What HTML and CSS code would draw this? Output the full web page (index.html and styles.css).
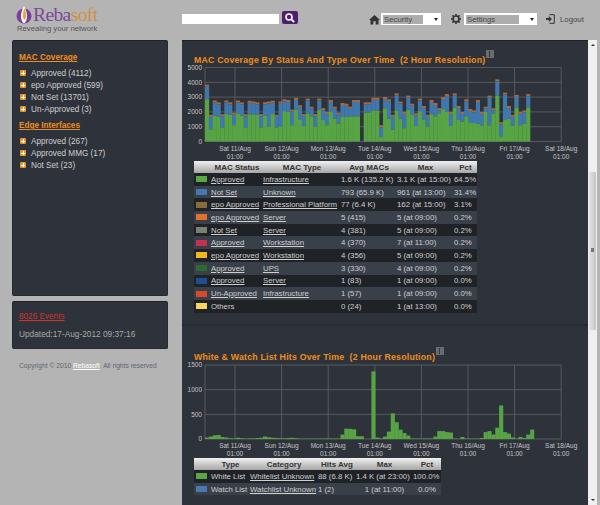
FILE: index.html
```html
<!DOCTYPE html>
<html lang="en">
<head>
    <meta charset="UTF-8">
    <title>Rebasoft</title>
    <link rel="stylesheet" href="styles.css">
</head>
<body>
    <header class="top">
        <div class="logo">
            <svg class="logo-mark" width="16" height="18" viewBox="0 0 16 18">
                <circle cx="8" cy="10" r="7.5" fill="#7b3f98"/>
                <path d="M8 0 C6.5 3 5 6 5 10 C5 14 6.5 17 8 17 C9.5 17 11 14 11 10 C11 6 9.5 3 8 0 Z" fill="#fff"/>
                <path d="M8.5 2 C7 6 6.5 9 7.5 13 C8.5 15 10 13 10 10 C10 7 9.5 4 8.5 2 Z" fill="#eda62c"/>
            </svg>
            <div class="logo-name"><span class="reba">Reba</span><span class="soft">soft</span></div>
            <div class="logo-tag">Revealing your network</div>
        </div>
        <div class="search">
            <div class="search-box"></div>
            <div class="search-btn">
                <svg width="10" height="10" viewBox="0 0 10 10">
                    <circle cx="4" cy="4" r="3" fill="none" stroke="#fff" stroke-width="1.6"/>
                    <path d="M6.2 6.2 L9.2 9.2" stroke="#fff" stroke-width="1.8"/>
                </svg>
            </div>
        </div>
        <nav class="nav">
            <svg class="nav-icon" width="11" height="11" viewBox="0 0 11 11">
                <path d="M5.5 1 L11 6 L9.5 6 L9.5 10.5 L6.7 10.5 L6.7 7.2 L4.3 7.2 L4.3 10.5 L1.5 10.5 L1.5 6 L0 6 Z" fill="#333"/>
            </svg>
            <div class="pick pick-security"><span class="pick-label">Security</span><i class="pick-arrow"></i></div>
            <svg class="nav-icon gear" width="10" height="10" viewBox="0 0 10 10">
                <circle cx="5" cy="5" r="3" fill="none" stroke="#333" stroke-width="1.7"/>
                <path d="M5 0 V2 M5 8 V10 M0 5 H2 M8 5 H10 M1.4 1.4 L2.8 2.8 M7.2 7.2 L8.6 8.6 M1.4 8.6 L2.8 7.2 M7.2 2.8 L8.6 1.4" stroke="#333" stroke-width="1.5"/>
            </svg>
            <div class="pick pick-settings"><span class="pick-label">Settings</span><i class="pick-arrow"></i></div>
            <svg class="nav-icon logout-icon" width="9" height="10" viewBox="0 0 9 10">
                <path d="M3.5 0.7 H8.3 V9.3 H3.5" fill="none" stroke="#333" stroke-width="1"/>
                <path d="M0 4 H2.8 V2 L6 5 L2.8 8 V6 H0 Z" fill="#333"/>
            </svg>
            <a class="logout">Logout</a>
        </nav>
    </header>

    <div class="page">
        <aside class="side">
            <section class="box box-tree">
                <h3 class="tree-title">MAC Coverage</h3>
                <ul class="tree">
                    <li><i class="plus"></i>Approved (4112)</li>
                    <li><i class="plus"></i>epo Approved (599)</li>
                    <li><i class="plus"></i>Not Set (13701)</li>
                    <li><i class="plus"></i>Un-Approved (3)</li>
                </ul>
                <h3 class="tree-title">Edge Interfaces</h3>
                <ul class="tree">
                    <li><i class="plus"></i>Approved (267)</li>
                    <li><i class="plus"></i>Approved MMG (17)</li>
                    <li><i class="plus"></i>Not Set (23)</li>
                </ul>
            </section>
            <section class="box box-events">
                <a class="events">8026 Events</a>
                <p class="updated">Updated:17-Aug-2012 09:37:16</p>
            </section>
            <p class="copy">Copyright © 2010 <span class="copy-link">Rebasoft</span>. All rights reserved</p>
        </aside>

        <main class="main">
            <section class="report report-mac">
                <h2 class="report-title">MAC Coverage By Status And Type Over Time &nbsp;(2 Hour Resolution)<i class="mini"></i></h2>
                <svg class="chart" id="chartMac" width="400" height="99"></svg>
                <table class="grid grid-mac">
                    <thead>
                        <tr><th class="c-sw"></th><th class="c-a">MAC Status</th><th class="c-b">MAC Type</th><th class="c-c">Avg MACs</th><th class="c-d">Max</th><th class="c-e">Pct</th></tr>
                    </thead>
                    <tbody>
                        <tr><td><i class="sw s1"></i></td><td><a>Approved</a></td><td><a>Infrastructure</a></td><td>1.6 K (135.2 K)</td><td>3.1 K (at 15:00)</td><td>64.5%</td></tr>
                        <tr><td><i class="sw s2"></i></td><td><a>Not Set</a></td><td><a>Unknown</a></td><td>793 (65.9 K)</td><td>961 (at 13:00)</td><td>31.4%</td></tr>
                        <tr><td><i class="sw s3"></i></td><td><a>epo Approved</a></td><td><a>Professional Platform</a></td><td>77 (6.4 K)</td><td>162 (at 15:00)</td><td>3.1%</td></tr>
                        <tr><td><i class="sw s4"></i></td><td><a>epo Approved</a></td><td><a>Server</a></td><td>5 (415)</td><td>5 (at 09:00)</td><td>0.2%</td></tr>
                        <tr><td><i class="sw s5"></i></td><td><a>Not Set</a></td><td><a>Server</a></td><td>4 (381)</td><td>5 (at 09:00)</td><td>0.2%</td></tr>
                        <tr><td><i class="sw s6"></i></td><td><a>Approved</a></td><td><a>Workstation</a></td><td>4 (370)</td><td>7 (at 11:00)</td><td>0.2%</td></tr>
                        <tr><td><i class="sw s7"></i></td><td><a>epo Approved</a></td><td><a>Workstation</a></td><td>4 (356)</td><td>5 (at 09:00)</td><td>0.2%</td></tr>
                        <tr><td><i class="sw s8"></i></td><td><a>Approved</a></td><td><a>UPS</a></td><td>3 (330)</td><td>4 (at 09:00)</td><td>0.2%</td></tr>
                        <tr><td><i class="sw s9"></i></td><td><a>Approved</a></td><td><a>Server</a></td><td>1 (83)</td><td>1 (at 09:00)</td><td>0.0%</td></tr>
                        <tr><td><i class="sw s10"></i></td><td><a>Un-Approved</a></td><td><a>Infrastructure</a></td><td>1 (57)</td><td>1 (at 09:00)</td><td>0.0%</td></tr>
                        <tr><td><i class="sw s11"></i></td><td>Others</td><td></td><td>0 (24)</td><td>1 (at 13:00)</td><td>0.0%</td></tr>
                    </tbody>
                </table>
            </section>
            <section class="report report-lists">
                <h2 class="report-title">White &amp; Watch List Hits Over Time &nbsp;(2 Hour Resolution)<i class="mini"></i></h2>
                <svg class="chart" id="chartLists" width="400" height="99"></svg>
                <table class="grid grid-lists">
                    <thead>
                        <tr><th class="c-sw"></th><th class="l-a">Type</th><th class="l-b">Category</th><th class="l-c">Hits Avg</th><th class="l-d">Max</th><th class="l-e">Pct</th></tr>
                    </thead>
                    <tbody>
                        <tr><td><i class="sw s1"></i></td><td>White List</td><td><a>Whitelist Unknown</a></td><td>88 (6.8 K)</td><td>1.4 K (at 23:00)</td><td>100.0%</td></tr>
                        <tr><td><i class="sw s2"></i></td><td>Watch List</td><td><a>Watchlist Unknown</a></td><td>1 (2)</td><td class="mid">1 (at 11:00)</td><td class="mid">0.0%</td></tr>
                    </tbody>
                </table>
            </section>
        </main>
        <div class="scroll">
            <i class="scroll-up"></i>
            <div class="thumb"><i class="grip"></i></div>
            <i class="scroll-down"></i>
        </div>
    </div>

    <script src="chart.js"></script>
</body>
</html>
```

FILE: styles.css
```css
html, body {
    margin: 0;
    height: 505px;
    overflow: hidden;
}

body {
    background: #b4b4b4;
    font-family: "Liberation Sans", Arial, sans-serif;
    color: #d0d0d0;
}

/* header */
.top {
    display: flex;
    height: 40px;
    box-sizing: border-box;
}

.logo {
    position: relative;
    width: 182px;
    flex: none;
}

.logo-mark {
    position: absolute;
    left: 16px;
    top: 6px;
}

.logo-name {
    position: absolute;
    left: 33px;
    top: 5px;
    font-family: "Liberation Serif", serif;
    font-size: 19.5px;
    letter-spacing: -0.6px;
    line-height: 19px;
}

.reba {
    color: #7b4a9c;
}

.soft {
    color: #cf9240;
}

.logo-tag {
    position: absolute;
    left: 17px;
    top: 24px;
    font-size: 7.7px;
    line-height: 9px;
    color: #555;
}

.search {
    display: flex;
    gap: 3px;
    width: 187px;
    padding-top: 11px;
    box-sizing: border-box;
    flex: none;
}

.search-box {
    width: 97px;
    height: 10px;
    margin-top: 3px;
    background: #fff;
}

.search-btn {
    width: 16px;
    height: 13px;
    background: #4d1f6d;
    border-radius: 2px;
    display: flex;
    align-items: center;
    justify-content: center;
}

.nav {
    display: flex;
    align-items: center;
    height: 38px;
    color: #444;
}

.nav-icon {
    flex: none;
}

.pick {
    display: flex;
    align-items: center;
    height: 12px;
    background: #fff;
    padding: 0 2px;
    box-sizing: border-box;
    margin-left: 1px;
}

.pick-security {
    width: 60px;
}

.pick-settings {
    width: 73px;
    margin-left: 3px;
}

.gear {
    margin-left: 10px;
}

.pick-label {
    display: block;
    background: #adadad;
    height: 9px;
    line-height: 9px;
    font-size: 7.8px;
    padding-left: 1px;
    color: #444;
    flex: 1;
    margin-right: 11px;
}

.pick-arrow {
    width: 0;
    height: 0;
    border-left: 2.5px solid transparent;
    border-right: 2.5px solid transparent;
    border-top: 3px solid #222;
    margin-right: 1px;
}

.logout-icon {
    margin-left: 9px;
}

.logout {
    margin-left: 5px;
    font-size: 7.8px;
    color: #444;
}

/* page body */
.page {
    display: flex;
    height: 465px;
    padding-left: 12px;
}

.side {
    width: 156px;
    margin-right: 14px;
    flex: none;
}

.box {
    background: #2e323a;
    border: 1px solid #26292f;
    border-top-color: #1f2226;
    border-radius: 2px;
    box-sizing: border-box;
}

.box-tree {
    height: 256px;
    padding: 11px 6px 0;
}

.tree-title {
    margin: 0;
    font-size: 8.2px;
    line-height: 11px;
    font-weight: bold;
    color: #ee8e1f;
    text-decoration: underline;
}

.tree {
    list-style: none;
    margin: 4px 0 5px;
    padding: 0;
}

.tree li {
    display: flex;
    align-items: center;
    height: 12px;
    font-size: 8.2px;
    color: #cfcfcf;
}

.plus {
    position: relative;
    width: 6px;
    height: 6px;
    margin: 0 5px 0 1px;
    background: #e8962a;
    border-radius: 1px;
    flex: none;
}

.plus::before {
    content: "";
    position: absolute;
    left: 1px;
    top: 2.5px;
    width: 4px;
    height: 1px;
    background: #fff;
}

.plus::after {
    content: "";
    position: absolute;
    left: 2.5px;
    top: 1px;
    width: 1px;
    height: 4px;
    background: #fff;
}

.box-events {
    height: 48px;
    margin-top: 5px;
    padding: 9px 6px 0;
}

.events {
    display: block;
    font-size: 8.2px;
    line-height: 11px;
    color: #c8362c;
    text-decoration: underline;
}

.updated {
    margin: 7px 0 0;
    font-size: 8.3px;
    line-height: 11px;
    color: #a8a8a8;
}

.copy {
    margin: 12px 0 0 7px;
    font-size: 6.7px;
    line-height: 10px;
    color: #5f6670;
    white-space: nowrap;
}

.copy-link {
    color: #fff;
    text-decoration: underline;
}

.main {
    width: 406px;
    flex: none;
    background: #2e323a;
    border-top: 1px solid #1f2226;
    box-sizing: border-box;
    overflow: hidden;
}

.report-mac {
    height: 283px;
    padding-top: 9px;
    box-sizing: border-box;
}

.report-lists {
    padding-top: 21px;
    border-top: 2px solid #272a30;
}

.report-title {
    margin: 0 0 0 12px;
    height: 12px;
    font-size: 8.8px;
    line-height: 12px;
    font-weight: bold;
    color: #ee8e1f;
    letter-spacing: 0.2px;
    white-space: nowrap;
}

.mini {
    position: relative;
    display: inline-block;
    width: 8px;
    height: 8px;
    margin-left: 1px;
    background: #6a6d70;
    vertical-align: 5px;
}

.mini::after {
    content: "";
    position: absolute;
    left: 3px;
    top: 1px;
    width: 1px;
    height: 6px;
    background: #33363b;
}

.chart {
    display: block;
}

.chart .line {
    stroke: #565a60;
    stroke-width: 1;
    fill: none;
}

.chart text {
    font-size: 6.5px;
    fill: #c6c6c6;
}

.chart .tick-y {
    text-anchor: end;
}

.chart .tick-x {
    text-anchor: middle;
}

.bar-green {
    fill: #57a445;
}

.bar-blue {
    fill: #3f78ae;
}

.bar-cap {
    fill: #b0683a;
}

.grid {
    margin-left: 12px;
    border-collapse: collapse;
    table-layout: fixed;
    font-size: 7.8px;
    color: #cfcfcf;
}

.grid th {
    height: 12px;
    padding: 0;
    font-size: 8px;
    font-weight: bold;
    color: #333;
    background: linear-gradient(#f0f0f0, #a6a6a6);
    text-align: center;
}

.grid td {
    height: 12.7px;
    padding: 0;
    white-space: nowrap;
    overflow: hidden;
}

.grid tbody tr:nth-child(odd) {
    background: #1f2227;
}

.grid tbody tr:nth-child(even) {
    background: #3a404a;
}

.grid a {
    color: #cfcfcf;
    text-decoration: underline;
}

.grid .mid {
    text-align: center;
}

.grid-mac {
    width: 283px;
}

.grid-lists {
    width: 247px;
}

.c-sw {
    width: 17px;
}

.c-a {
    width: 52px;
}

.c-b {
    width: 78px;
}

.c-c {
    width: 56px;
}

.c-d {
    width: 57px;
}

.c-e {
    width: 23px;
}

.l-a {
    width: 39px;
}

.l-b {
    width: 68px;
}

.l-c {
    width: 38px;
}

.l-d {
    width: 57px;
}

.l-e {
    width: 28px;
}

.sw {
    display: block;
    width: 11px;
    height: 6px;
    margin-left: 2px;
}

.s1 { background: #58a845; }
.s2 { background: #4579b2; }
.s3 { background: #8a6c3c; }
.s4 { background: #e2702a; }
.s5 { background: #7c8070; }
.s6 { background: #c8304f; }
.s7 { background: #f0b81c; }
.s8 { background: #2f6b30; }
.s9 { background: #1b4f94; }
.s10 { background: #da4a2a; }
.s11 { background: #f8d65c; }

/* scrollbar */
.scroll {
    position: relative;
    width: 9px;
    flex: none;
    background: #efefef;
}

.scroll-up {
    position: absolute;
    left: 2.5px;
    top: 4px;
    border-left: 2px solid transparent;
    border-right: 2px solid transparent;
    border-bottom: 2px solid #333;
}

.scroll-down {
    position: absolute;
    left: 2.5px;
    bottom: 4px;
    border-left: 2px solid transparent;
    border-right: 2px solid transparent;
    border-top: 2px solid #333;
}

.thumb {
    position: absolute;
    left: 1px;
    top: 132px;
    width: 7px;
    height: 158px;
    background: linear-gradient(90deg, #e4e4e4, #c4c4c4);
    border-radius: 1px;
}

.grip {
    position: absolute;
    left: 2px;
    top: 76px;
    width: 3px;
    height: 4px;
    background: #777;
}
```

FILE: chart.js
```js
// total and green height of each stacked bar, in thousands
var macBars = [
    [3.84, 2.86], [1.8, .82], [2.77, 1.75], [2.65, 1.68], [1.84, .91], [2.77, 1.86], [2.64, 1.8], [1.95, 1.1],
    [2.77, 1.9], [2.64, 1.75], [1.84, .91], [2.75, 1.84], [2.7, 1.84], [2.65, 1.8], [1.85, .95], [2.65, 1.75],
    [2.7, 1], [2.75, 1.85], [1.8, .95], [2.7, 1], [2.85, 2.05], [2.8, 2], [2.15, 1.1], [2.95, 2.15],
    [2.45, 1.5], [1.85, 1.05], [2.9, 1.9], [2.35, 1.7], [1.85, 1], [2.9, 2.15], [2.25, 1.45], [2, 1.1],
    [2.8, 2], [2.35, 1.55], [1.95, 1.2], [2.6, 1.7], [2.55, 1.65], [2.35, 1.7], [2.8, 1.7], [2.8, 1.7],
    [0, 0], [2.65, 1.95], [2.65, 1.95], [2.95, 2.1], [2.95, 2.1], [1.1, .3], [3, 2.25], [2.85, 1.55],
    [1.8, .8], [3.25, 2.1], [2.7, 1.55], [2, .9], [3.1, 2.15], [2.55, 1.8], [1.9, 1.05], [2.9, 2.05],
    [2.4, 1.5], [1.8, 1], [2.8, 1.85], [2.6, 1.7], [2.25, 1.9], [3, 2.2], [3.2, 2], [2, 1.05],
    [3.25, 2.3], [2.4, 1.45], [2, 1.35], [2.85, 1.7], [2.2, 1.3], [2.1, 1.25], [2.8, 1.2], [2, 1.1],
    [2.35, 2], [3.1, 1.1], [2.25, 1.9], [4.2, 3.1], [1.3, .35], [3.3, 1.45], [2.4, 1.55], [1.8, 1.05],
    [3.15, 2.3], [2, 1.1], [2.1, 1.2], [3.2, 2.3]
];

var listBars = [
    30, 50, 75, 80, 40, 30, 15, 10, 25, 15, 8, 12, 12, 20, 25, 50, 35, 25, 20, 15, 12,
    20, 25, 15, 8, 8, 8, 8, 8, 8, 8, 12, 10, 10, 10, 90, 210, 205, 195, 55, 55, 0, 0,
    1370, 30, 15, 50, 150, 520, 340, 190, 120, 70, 10, 10, 10, 10, 10, 10, 50, 160, 160,
    140, 130, 10, 5, 40, 8, 8, 8, 8, 20, 140, 160, 90, 230, 680, 140, 110, 30, 10, 40,
    20, 90, 190
];

var days = ["Sat 11/Aug", "Sun 12/Aug", "Mon 13/Aug", "Tue 14/Aug", "Wed 15/Aug", "Thu 16/Aug", "Fri 17/Aug", "Sat 18/Aug"];
var NS = "http://www.w3.org/2000/svg";

var LEFT = 23;
var RIGHT = 379;
var BAR = 3.87;
var DAY = 46.6;
var FIRST_DAY = 53;

function add(svg, name, attrs, text) {
    var el = document.createElementNS(NS, name);
    for (var k in attrs) {
        el.setAttribute(k, attrs[k]);
    }
    if (text) {
        el.textContent = text;
    }
    svg.appendChild(el);
}

function axes(svg, top, bottom, labels) {
    var step = (bottom - top) / (labels.length - 1);
    labels.forEach(function (label, i) {
        var y = top + step * i;
        add(svg, "line", { "class": "line", x1: LEFT, x2: RIGHT, y1: y, y2: y });
        add(svg, "text", { "class": "tick-y", x: LEFT - 3, y: y + 2.3 }, label);
    });
    add(svg, "line", { "class": "line", x1: LEFT, x2: LEFT, y1: top, y2: bottom });
    days.forEach(function (day, i) {
        var x = FIRST_DAY + DAY * i;
        add(svg, "line", { "class": "line", x1: x, x2: x, y1: top, y2: bottom });
        add(svg, "text", { "class": "tick-x", x: x, y: bottom + 9 }, day);
        add(svg, "text", { "class": "tick-x", x: x, y: bottom + 17 }, "01:00");
    });
}

function rect(svg, cls, i, y, h) {
    add(svg, "rect", { "class": cls, x: LEFT + BAR * i, y: y, width: BAR + 0.25, height: h });
}

function drawMac() {
    var svg = document.getElementById("chartMac");
    var top = 5.5, bottom = 79.5;
    var unit = (bottom - top) / 5;
    axes(svg, top, bottom, ["5000", "4000", "3000", "2000", "1000", "0"]);
    macBars.forEach(function (bar, i) {
        if (!bar[0]) {
            return;
        }
        var totalY = bottom - bar[0] * unit;
        var greenY = bottom - bar[1] * unit;
        rect(svg, "bar-cap", i, totalY, 2);
        rect(svg, "bar-blue", i, totalY + 2, greenY - totalY - 2);
        rect(svg, "bar-green", i, greenY, bottom - greenY);
    });
}

function drawLists() {
    var svg = document.getElementById("chartLists");
    var top = 6, bottom = 80;
    axes(svg, top, bottom, ["1500", "1000", "500", "0"]);
    listBars.forEach(function (value, i) {
        var h = value / 1500 * (bottom - top);
        rect(svg, "bar-green", i, bottom - h, h);
    });
}

drawMac();
drawLists();
```
